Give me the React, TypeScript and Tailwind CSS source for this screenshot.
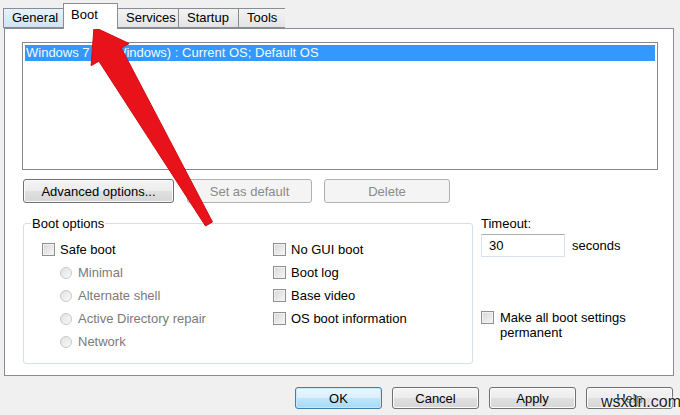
import React from 'react';

const Check = () => (
  <span className="inline-block shrink-0 w-[13px] h-[13px] border border-[#8f8f8f] bg-linear-to-br from-[#d6d6d6] to-[#f7f7f7] shadow-[inset_0_0_0_1px_#f2f2f2]" />
);

const Radio = () => (
  <span className="inline-block shrink-0 w-[12px] h-[12px] rounded-full border border-[#c9c9c9] bg-linear-to-br from-[#e2e2e2] to-[#f9f9f9]" />
);

const btnBase =
  'h-full flex items-center justify-center rounded-[3px] border';
const btnNormal =
  'border-[#707070] text-black bg-[linear-gradient(to_bottom,#f4f4f4_0%,#ececec_50%,#e0e0e0_51%,#d6d6d6_100%)] shadow-[inset_0_0_0_1px_#fbfbfb]';
const btnDisabled = 'border-[#adb2b5] text-[#8a8a8a] bg-[#f4f4f4]';

const Tab = ({ label, className }: { label: string; className: string }) => (
  <div className={`h-[20px] border border-r-0 border-[#898c95] px-[8px] leading-[18px] ${className}`}>{label}</div>
);

const App: React.FC = () => {
  return (
    <div className="relative w-[680px] h-[415px] overflow-hidden bg-[#f0f0f0] text-[13px] leading-[15px] text-black font-['Liberation_Sans',Arial,sans-serif]">
      {/* tabs */}
      <div className="flex items-end h-[28px] pl-[3px]">
        <Tab label="General" className="w-[60px] bg-linear-to-b from-[#e6f2fb] to-[#cfe4f5]" />
        <div className="relative z-10 w-[55px] h-[26px] -mb-px border border-b-0 border-[#898c95] bg-white px-[7px] pt-[3px] leading-[15px]">
          Boot
        </div>
        <Tab label="Services" className="w-[60px] border-l-0 bg-linear-to-b from-[#f3f3f3] to-[#e4e4e4]" />
        <Tab label="Startup" className="w-[60px] bg-linear-to-b from-[#f3f3f3] to-[#e4e4e4]" />
        <Tab label="Tools" className="w-[47px] border-r bg-linear-to-b from-[#f3f3f3] to-[#e4e4e4]" />
      </div>

      {/* page */}
      <div className="ml-[4px] w-[670px] h-[348px] border border-[#898c95] bg-white">
        <div className="mt-[13px] ml-[17px] w-[636px] h-[128px] border border-[#828790] p-[2px]">
          <div className="h-[16px] bg-[#3399ff] pl-[1px] leading-[16px] text-[#f2f8ff]">
            Windows 7 (C:\Windows) : Current OS; Default OS
          </div>
        </div>

        <div className="flex h-[24px] mt-[9px] ml-[18px]">
          <button className={`${btnBase} ${btnNormal} w-[151px]`}>Advanced options...</button>
          <button className={`${btnBase} ${btnDisabled} w-[125px] ml-[13px]`}>Set as default</button>
          <button className={`${btnBase} ${btnDisabled} w-[126px] ml-[12px]`}>Delete</button>
        </div>

        <div className="flex mt-[13px]">
          <div className="relative mt-[7px] ml-[18px] w-[450px] h-[141px] rounded-[3px] border border-[#d5dfe5]">
            <span className="absolute -top-[8px] left-[7px] bg-white px-[1px]">Boot options</span>
            <div className="flex pt-[14px] pl-[18px]">
              <div className="w-[231px]">
                <div className="flex items-center h-[23px] gap-[5px]">
                  <Check />
                  <span>Safe boot</span>
                </div>
                {['Minimal', 'Alternate shell', 'Active Directory repair', 'Network'].map((t) => (
                  <div key={t} className="flex items-center h-[23px] gap-[6px] pl-[18px] text-[#7a7a7a]">
                    <Radio />
                    <span>{t}</span>
                  </div>
                ))}
              </div>
              <div>
                {['No GUI boot', 'Boot log', 'Base video', 'OS boot information'].map((t) => (
                  <div key={t} className="flex items-center h-[23px] gap-[5px]">
                    <Check />
                    <span>{t}</span>
                  </div>
                ))}
              </div>
            </div>
          </div>

          <div className="ml-[7px] pl-px">
            <div>Timeout:</div>
            <div className="flex items-center mt-[3px]">
              <div className="w-[84px] h-[23px] border border-[#dbe1e8] border-t-[#abadb3] pl-[7px] leading-[21px]">30</div>
              <span className="ml-[7px]">seconds</span>
            </div>
            <div className="flex gap-[6px] mt-[53px]">
              <span className="mt-px">
                <Check />
              </span>
              <span>
                Make all boot settings
                <br />
                permanent
              </span>
            </div>
          </div>
        </div>
      </div>

      {/* dialog buttons */}
      <div className="flex justify-end gap-[10px] h-[22px] mt-[11px] pr-[7px]">
        <button className={`${btnBase} w-[87px] border-[#3c7fb1] bg-[linear-gradient(to_bottom,#eaf6fd_0%,#d9f0fc_50%,#bee6fd_51%,#a7d9f5_100%)] shadow-[inset_0_0_0_1px_#c4e8fc]`}>
          OK
        </button>
        <button className={`${btnBase} ${btnNormal} w-[87px]`}>Cancel</button>
        <button className={`${btnBase} ${btnNormal} w-[87px]`}>Apply</button>
        <button className={`${btnBase} ${btnNormal} w-[87px]`}>Help</button>
      </div>

      {/* red arrow annotation */}
      <svg className="absolute left-0 top-0 pointer-events-none" width="680" height="415" viewBox="0 0 680 415">
        <polygon
          points="94,27 129.1,43.5 121.3,48 212.5,222 205.5,226 98.9,61.2 91.1,65.7"
          fill="#e8121a"
          stroke="#d10d14"
          strokeWidth="1"
          strokeLinejoin="round"
        />
      </svg>

      <span className="absolute left-[601px] top-[393px] text-[16px] leading-[18px] text-[#1e1e1e] font-['Liberation_Sans',Arial,sans-serif] [text-shadow:0_0_3px_#fff,0_0_3px_#fff]">
        wsxdn.com
      </span>
    </div>
  );
};

export default App;
